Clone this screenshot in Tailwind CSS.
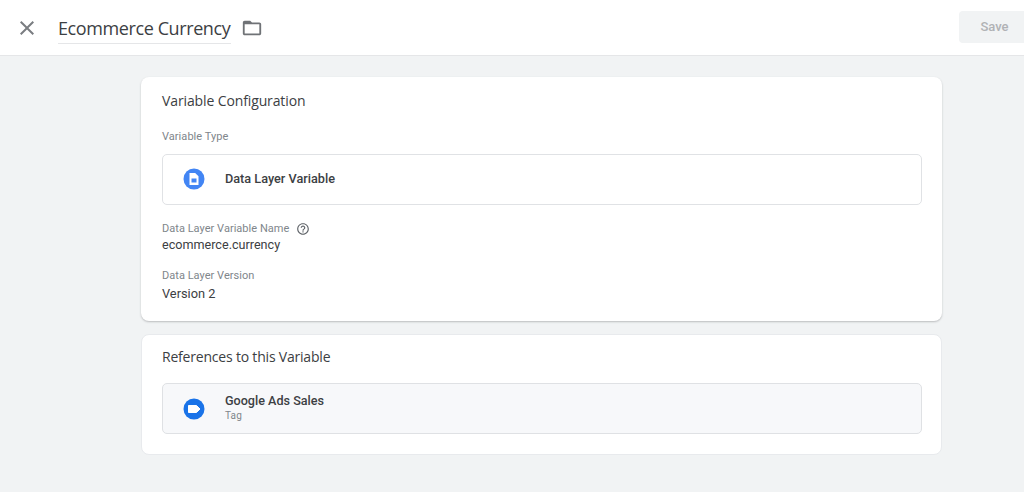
<!DOCTYPE html>
<html><head><meta charset="utf-8"><script src="https://cdn.jsdelivr.net/npm/@tailwindcss/browser@4"></script></head>
<body class="m-0 bg-[#f1f3f4] font-['Roboto',sans-serif] text-[#202124] overflow-hidden">
<div class="w-[1024px] h-[492px] flex flex-col">
  <header class="h-[56px] bg-white border-b border-[#e5e6e8] flex items-center shrink-0">
    <svg class="ml-[15px] w-[24px] h-[24px] mt-[1px]" viewBox="0 0 24 24" fill="#7a7d81"><path d="M19 6.41 17.59 5 12 10.59 6.41 5 5 6.41 10.59 12 5 17.590 6.41 19 12 13.41 17.59 19 19 17.590 13.41 12z"/></svg>
    <div class="ml-[19px] w-[173px] h-[31px] border-b border-[#e5e6e8] text-[18px] leading-[30px] font-['Open_Sans',sans-serif] tracking-[-0.4px] text-[#3c4043] whitespace-nowrap mt-[1px]">Ecommerce Currency</div>
    <svg class="ml-[10px] w-[22px] h-[22px] mt-[1px]" viewBox="0 0 24 24" fill="#6f7276"><path d="M20 6h-8l-2-2H4c-1.1 0-1.99.9-1.99 2L2 18c0 1.1.9 2 2 2h16c1.1 0 2-.9 2-2V8c0-1.100-.9-2-2-2zm0 12H4V8h16v10z"/></svg>
    <div class="ml-auto w-[65px] h-[32px] mt-[-1px] bg-[#f1f3f4] rounded-l-[4px] flex items-center justify-center pl-[6px] text-[13px] font-medium text-[#b0b2b5]">Save</div>
  </header>
  <main class="flex-1 pt-[21px] pl-[141px]">
    <section class="w-[801px] h-[244px] bg-white rounded-[8px] shadow-[0_1px_2px_rgba(60,64,67,0.3)] px-[21px] pt-[15px]">
      <h2 class="text-[14px] leading-[18px] text-[#3c4043] font-['Open_Sans',sans-serif] tracking-[-0.12px]">Variable Configuration</h2>
      <div class="mt-[20px] text-[11px] leading-[14px] text-[#80868b] tracking-[0.05px]">Variable Type</div>
      <div class="mt-[10px] w-[760px] h-[51px] border border-[#e0e2e5] rounded-[5px] flex items-center pl-[20px]">
        <svg class="w-[22px] h-[22px] shrink-0 mt-[-1px]" viewBox="0 0 22 22"><circle cx="11" cy="11" r="10.500" fill="#4285f4"/><path d="M6.500 5h5.700L15.500 8.300V17H6.500z" fill="#fff"/><rect x="8.500" y="10.500" width="5" height="4" fill="#4285f4"/></svg>
        <span class="ml-[20px] mt-[-2px] text-[12.700px] font-medium text-[#3c4043]">Data Layer Variable</span>
      </div>
      <div class="mt-[17px] flex items-center h-[14px] text-[11px] text-[#80868b] tracking-[0.03px]">Data Layer Variable Name
        <svg class="ml-[7px] w-[14px] h-[14px]" viewBox="0 0 24 24" fill="#5f6368"><path d="M11 18h2v-2h-2v2zm1-16C6.480 2 2 6.480 2 12s4.480 10 10 10 10-4.480 10-10S17.520 2 12 2zm0 18c-4.410 0-8-3.590-8-8s3.590-8 8-8 8 3.590 8 8-3.590 8-8 8zm0-14c-2.210 0-4 1.790-4 4h2c0-1.100.9-2 2-2s2 .9 2 2c0 2-3 1.750-3 5h2c0-2.250 3-2.500 3-5 0-2.210-1.790-4-4-4z"/></svg>
      </div>
      <div class="mt-[0px] text-[12.600px] leading-[17px] text-[#3c4043]">ecommerce.currency</div>
      <div class="mt-[16px] text-[11px] leading-[14px] text-[#80868b] tracking-[0.03px]">Data Layer Version</div>
      <div class="mt-[2px] text-[12.800px] leading-[17px] text-[#3c4043]">Version 2</div>
    </section>
    <section class="mt-[13px] w-[801px] h-[121px] bg-white rounded-[8px] border border-[#e8eaed] px-[20px] pt-[13px]">
      <h2 class="text-[14px] leading-[18px] text-[#3c4043] font-['Open_Sans',sans-serif] tracking-[-0.2px]">References to this Variable</h2>
      <div class="mt-[17px] w-[760px] h-[51px] bg-[#f7f8fa] border border-[#dfe1e4] rounded-[5px] flex items-center pl-[20px]">
        <svg class="w-[22px] h-[22px] shrink-0" viewBox="0 0 22 22"><circle cx="11" cy="11" r="10.500" fill="#1a73e8"/><path d="M5.500 7.500H13.500L17 11L13.500 14.500H5.500z" fill="#fff" stroke="#fff" stroke-linejoin="round"/></svg>
        <div class="ml-[20px] mt-[-2px] flex flex-col">
          <span class="text-[12.600px] leading-[16px] font-medium text-[#3c4043]">Google Ads Sales</span>
          <span class="text-[10px] leading-[13px] text-[#80868b] tracking-[0.2px]">Tag</span>
        </div>
      </div>
    </section>
  </main>
</div>
</body></html>
